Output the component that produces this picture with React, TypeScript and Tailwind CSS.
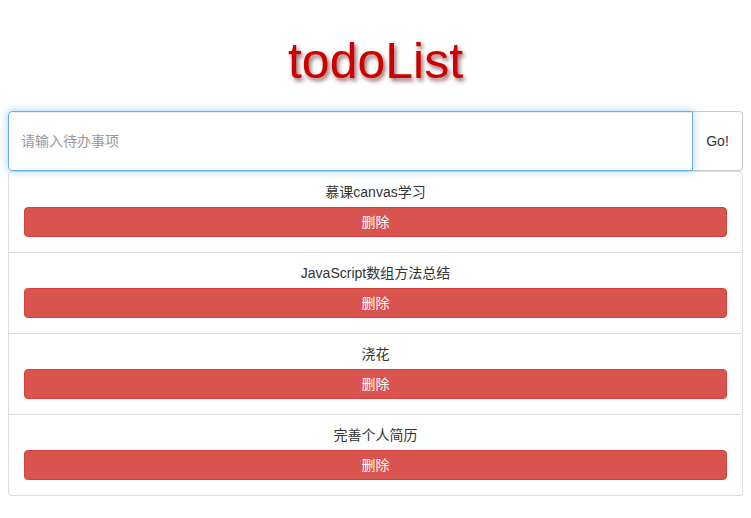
const todos = ['慕课canvas学习', 'JavaScript数组方法总结', '浇花', '完善个人简历'];

export default function App() {
  return (
    <div
      className="min-h-screen bg-white px-2 text-[14px] text-[#333]"
      style={{ fontFamily: '"Liberation Sans", "Noto Sans CJK SC", sans-serif' }}
    >
      {/* 标题 */}
      <h1
        className="pt-[31px] mb-[20px] h-[91px] text-center text-[50px] leading-[60px] text-[#cc0000] [text-shadow:2px_3px_4px_rgba(70,0,0,0.6)]"
        style={{ fontFamily: '"Liberation Sans", Arial, sans-serif' }}
      >
        todoList
      </h1>

      {/* 输入框 */}
      <div className="flex h-[60px]">
        <input
          type="text"
          placeholder="请输入待办事项"
          className="relative z-10 flex-1 min-w-0 rounded-l-[4px] border border-[#66afe9] px-3 text-[14px] text-[#555] outline-none shadow-[inset_0_1px_1px_rgba(0,0,0,0.075),0_0_8px_rgba(102,175,233,0.6)] placeholder:text-[#999]"
        />
        <button className="w-[50px] shrink-0 rounded-r-[4px] border border-l-0 border-[#ccc] bg-white text-[14px] text-[#333]">
          Go!
        </button>
      </div>

      {/* 列表 */}
      <ul>
        {todos.map((todo, index) => (
          <li
            key={index}
            className={`border border-[#ddd] px-[15px] py-[10px] text-center ${index > 0 ? 'border-t-0' : 'rounded-t-[4px]'} ${index === todos.length - 1 ? 'rounded-b-[4px]' : ''}`}
          >
            <div className="h-[20px] leading-[20px]">{todo}</div>
            <button className="mt-[5px] mb-[5px] block h-[30px] w-full rounded-[4px] border border-[#d43f3a] bg-[#d9534f] text-[14px] leading-[28px] text-white">
              删除
            </button>
          </li>
        ))}
      </ul>
    </div>
  );
}
